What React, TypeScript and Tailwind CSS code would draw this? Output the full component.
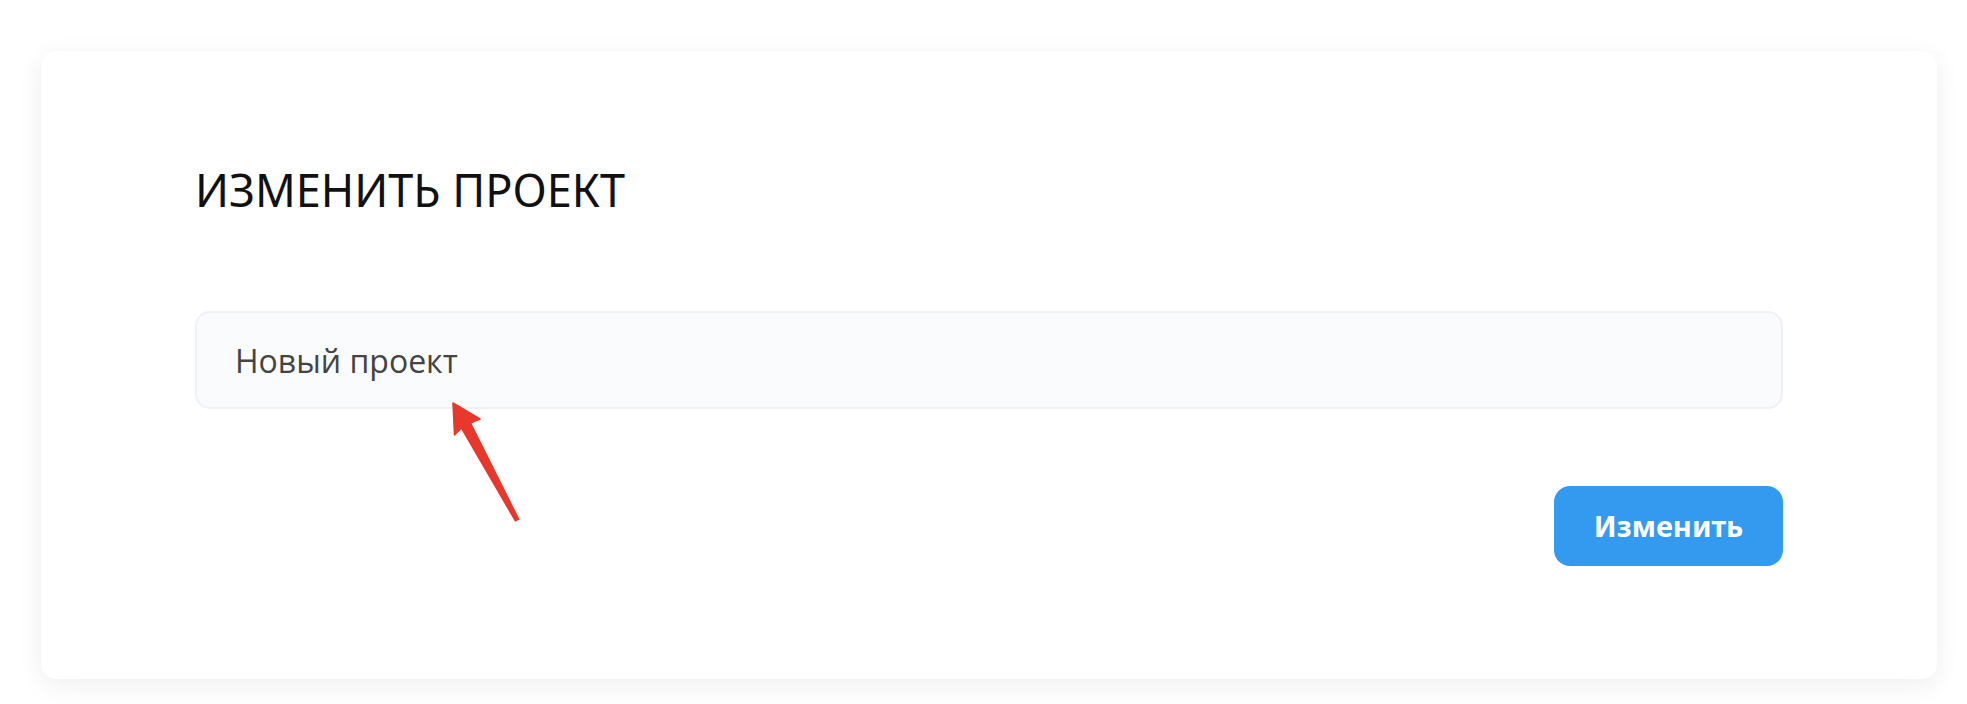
import { useState } from "react";

function RedArrow() {
  // annotation arrow pointing at the project name field
  return (
    <svg
      className="pointer-events-none absolute left-[399px] top-[344px]"
      width="90"
      height="135"
      viewBox="0 0 90 135"
      fill="none"
    >
      <path
        d="M13 8 L40 24 L30.5 28 L78.6 124.1 L75.4 125.9 L21.5 33 L14.5 40 Z"
        fill="#e8382b"
        stroke="#e8382b"
        strokeWidth="1.5"
        strokeLinejoin="round"
      />
    </svg>
  );
}

export default function App() {
  const [projectName, setProjectName] = useState("Новый проект");

  return (
    <div className="min-h-screen bg-white pb-[25px] pl-[41px] pr-[30px] pt-[51px]">
      <div className="relative flex h-[628px] flex-col rounded-[15px] bg-white px-[154px] pt-[116px] shadow-[0_6px_26px_rgba(0,0,0,0.07)]">
        <h1 className="font-['Noto_Sans',sans-serif] text-[45px] font-normal leading-[45px] text-[#111111]">
          ИЗМЕНИТЬ ПРОЕКТ
        </h1>

        <input
          type="text"
          value={projectName}
          onChange={(e) => setProjectName(e.target.value)}
          className="mt-[99px] h-[98px] w-full rounded-[15px] border-2 border-[#f0f1f6] bg-[#fafbfd] px-[38px] font-['Open_Sans',sans-serif] text-[32px] text-[#444444] outline-none"
        />

        <div className="mt-[77px] flex justify-end">
          <button
            type="button"
            className="h-[80px] w-[229px] rounded-[16px] bg-[#349af0] font-['Noto_Sans',sans-serif] text-[29px] font-bold text-white"
          >
            Изменить
          </button>
        </div>

        <RedArrow />
      </div>
    </div>
  );
}
